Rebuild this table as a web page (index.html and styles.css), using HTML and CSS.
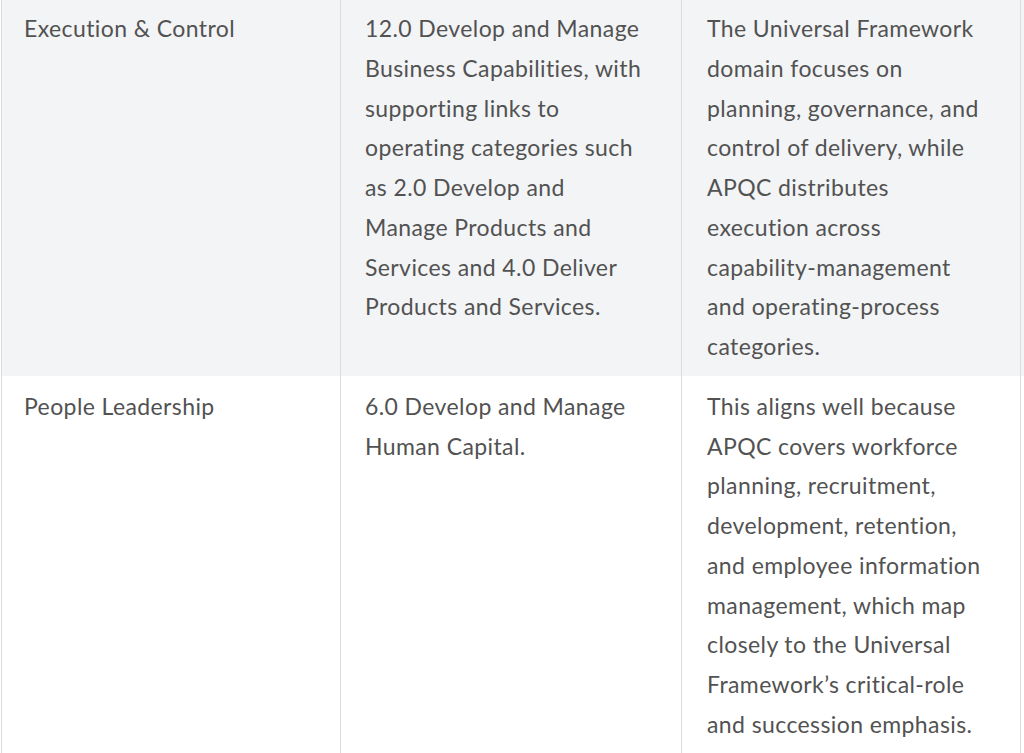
FILE: index.html
```html
<!DOCTYPE html>
<html lang="en">
<head>
<meta charset="utf-8">
<title>Mapping</title>
<link rel="stylesheet" href="styles.css">
</head>
<body>
<div class="table">
  <div class="row row-alt">
    <div class="cell">Execution &amp; Control</div>
    <div class="cell">12.0 Develop and Manage<br>Business Capabilities, with<br>supporting links to<br>operating categories such<br>as 2.0 Develop and<br>Manage Products and<br>Services and 4.0 Deliver<br>Products and Services.</div>
    <div class="cell">The Universal Framework<br>domain focuses on<br>planning, governance, and<br>control of delivery, while<br>APQC distributes<br>execution across<br>capability-management<br>and operating-process<br>categories.</div>
  </div>
  <div class="row">
    <div class="cell">People Leadership</div>
    <div class="cell">6.0 Develop and Manage<br>Human Capital.</div>
    <div class="cell">This aligns well because<br>APQC covers workforce<br>planning, recruitment,<br>development, retention,<br>and employee information<br>management, which map<br>closely to the Universal<br>Framework’s critical-role<br>and succession emphasis.</div>
  </div>
</div>
</body>
</html>
```
FILE: styles.css
```css
html, body {
  margin: 0;
  padding: 0;
  background: #ffffff;
}
body {
  font-family: Lato, "Noto Sans", sans-serif;
  font-size: 23px;
  letter-spacing: 0.4px;
  line-height: 39.75px;
  color: #525252;
  overflow: hidden;
}
.table {
  margin-top: -2px;
  padding-left: 1px;
}
.row {
  display: grid;
  grid-template-columns: 339px 341px 340px;
}
.row-alt {
  background: #f3f4f6;
}
.row-alt .cell {
  padding-bottom: 9px;
}
.cell {
  border-left: 1px solid #dcdcdc;
  padding: 11px 20px 11px 24px;
  white-space: nowrap;
}
.cell:first-child {
  padding-left: 22px;
}
.cell:last-child {
  border-right: 1px solid #dcdcdc;
  padding-left: 25px;
}
```
